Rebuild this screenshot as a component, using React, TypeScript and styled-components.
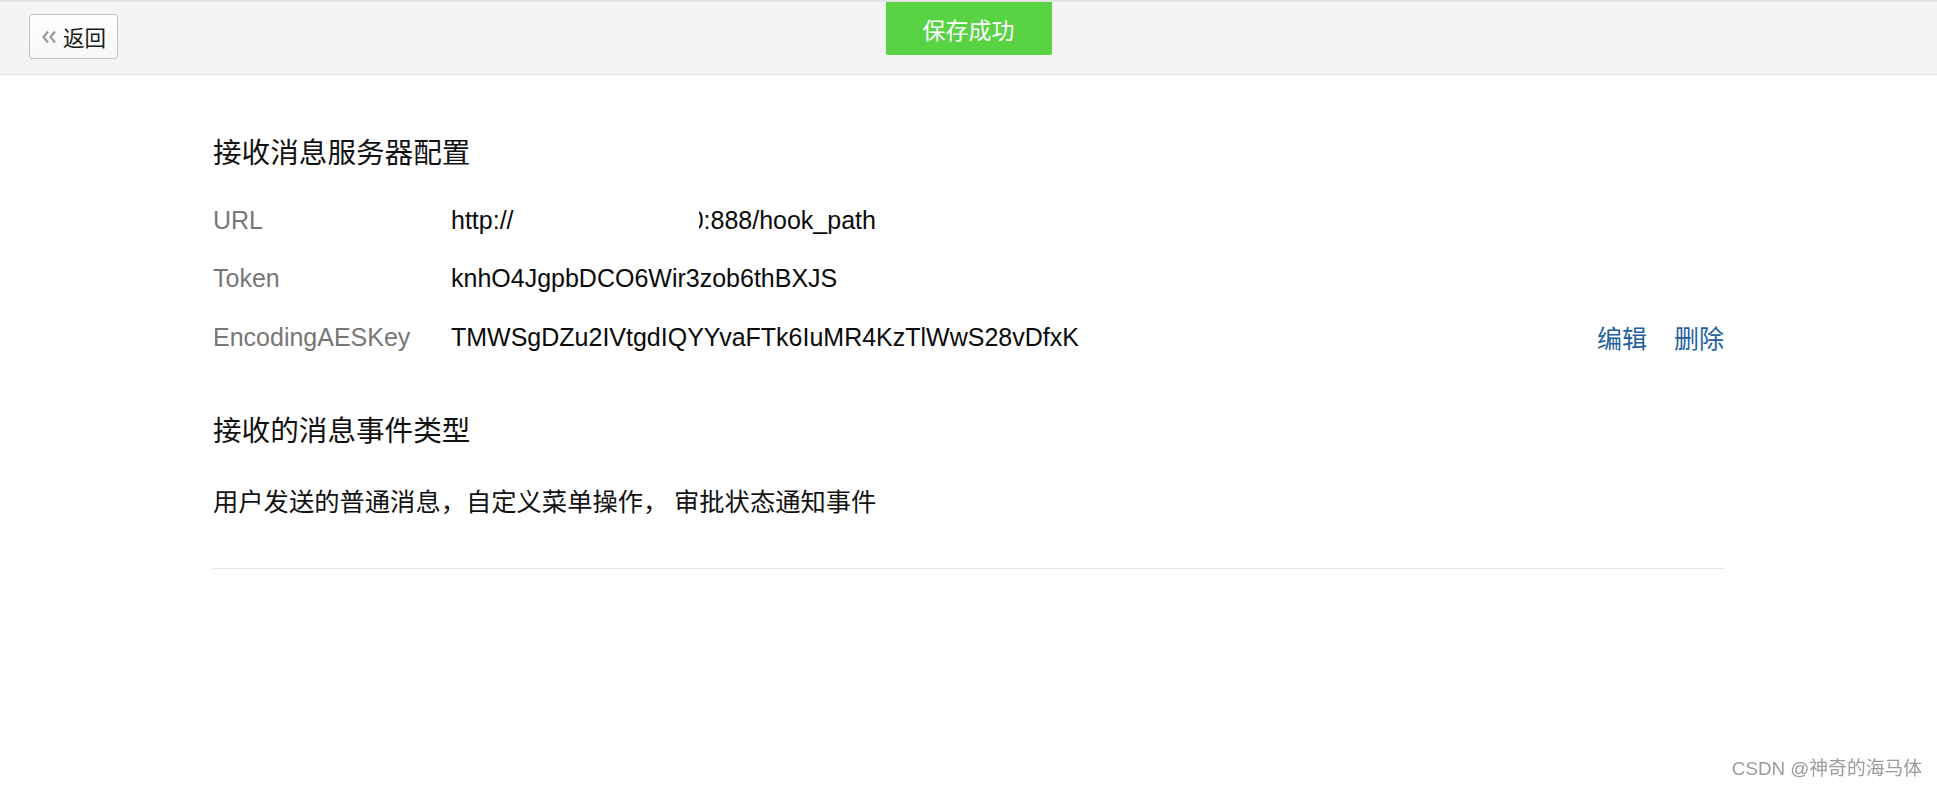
import React from "react";
import styled, { createGlobalStyle } from "styled-components";

const GlobalStyle = createGlobalStyle`
  html, body {
    margin: 0;
    padding: 0;
    background: #ffffff;
  }
  body {
    font-family: "Liberation Sans", Arial, "Noto Sans CJK SC", sans-serif;
    color: #111;
  }
`;

const Page = styled.div`
  position: relative;
  min-height: 787px;
  background: #fff;
`;

const Header = styled.header`
  box-sizing: border-box;
  height: 75px;
  border-top: 2px solid #e4e4e4;
  border-bottom: 1px solid #e2e2e2;
  background: #f4f4f4;
  display: flex;
  align-items: flex-start;
  padding: 12px 0 0 29px;
`;

const BackButton = styled.button`
  box-sizing: border-box;
  height: 45px;
  width: 89px;
  display: flex;
  align-items: center;
  gap: 6px;
  padding: 0 0 0 11px;
  border: 1px solid #c4c4c4;
  border-radius: 3px;
  background: linear-gradient(#ffffff, #f7f7f7);
  color: #1a1a1a;
  font-family: "Noto Sans CJK SC", sans-serif;
  font-size: 21.5px;
  cursor: pointer;
`;

const Toast = styled.div`
  position: absolute;
  top: 2px;
  left: 50%;
  transform: translateX(-50%);
  width: 166px;
  height: 53px;
  background: #58d343;
  border-radius: 0 0 2px 2px;
  color: #fff;
  font-family: "Noto Sans CJK SC", sans-serif;
  font-size: 23px;
  display: flex;
  align-items: center;
  justify-content: center;
`;

const Content = styled.main`
  width: 1511px;
  margin: 0 auto;
  padding-top: 56px;
`;

const SectionTitle = styled.h2<{ $gap: number }>`
  margin: 0 0 ${(p) => p.$gap}px;
  font-family: "Noto Sans CJK SC", sans-serif;
  font-weight: 400;
  font-size: 28.6px;
  line-height: 40px;
  color: #111;
`;

const Row = styled.div`
  display: flex;
  align-items: center;
  height: 58.5px;
  font-size: 25px;
`;

const Label = styled.div`
  width: 238px;
  flex: none;
  color: #777;
`;

const Value = styled.div`
  flex: 1;
  color: #0a0a0a;
  white-space: nowrap;
  display: flex;
  align-items: center;
`;

const Redacted = styled.span`
  display: inline-block;
  width: 185px;
`;

const ClippedDigit = styled.span`
  display: inline-block;
  width: 5px;
  overflow: hidden;
  direction: rtl;
  white-space: nowrap;
`;

const Actions = styled.div`
  display: flex;
  gap: 27px;
  font-family: "Noto Sans CJK SC", sans-serif;
  font-size: 25px;
`;

const ActionLink = styled.a`
  color: #1f5f9f;
  text-decoration: none;
  cursor: pointer;
`;

const Section2 = styled.section`
  margin-top: 42px;
`;

const BodyText = styled.p`
  margin: 33px 0 0;
  font-family: "Noto Sans CJK SC", sans-serif;
  font-size: 25.3px;
  line-height: 36px;
  color: #111;
`;

const Divider = styled.hr`
  margin: 50px 0 0;
  border: none;
  border-top: 1px solid #e6e6e6;
`;

const Watermark = styled.div`
  position: fixed;
  right: 15px;
  bottom: 7px;
  font-family: "Liberation Sans", "Noto Sans CJK SC", sans-serif;
  font-size: 18.8px;
  color: #9c9c9c;
  text-shadow: 0 0 1px #fff;
`;

const DoubleChevron = () => (
  <svg width="16" height="14" viewBox="0 0 16 14" fill="none" stroke="#9a9a9a" strokeWidth="2.2">
    <polyline points="7,1.5 2.5,7 7,12.5" />
    <polyline points="14,1.5 9.5,7 14,12.5" />
  </svg>
);

const rows = [
  { label: "Token", value: "knhO4JgpbDCO6Wir3zob6thBXJS" },
];

export default function App() {
  return (
    <Page>
      <GlobalStyle />
      <Header>
        <BackButton>
          <DoubleChevron />
          返回
        </BackButton>
      </Header>
      <Toast>保存成功</Toast>
      <Content>
        <SectionTitle $gap={20}>接收消息服务器配置</SectionTitle>
        <Row>
          <Label>URL</Label>
          <Value>
            http://
            <Redacted />
            <ClippedDigit>0</ClippedDigit>
            :888/hook_path
          </Value>
        </Row>
        {rows.map((r) => (
          <Row key={r.label}>
            <Label>{r.label}</Label>
            <Value>{r.value}</Value>
          </Row>
        ))}
        <Row>
          <Label>EncodingAESKey</Label>
          <Value>TMWSgDZu2IVtgdIQYYvaFTk6IuMR4KzTlWwS28vDfxK</Value>
          <Actions>
            <ActionLink>编辑</ActionLink>
            <ActionLink>删除</ActionLink>
          </Actions>
        </Row>
        <Section2>
          <SectionTitle $gap={0}>接收的消息事件类型</SectionTitle>
          <BodyText>用户发送的普通消息，自定义菜单操作， 审批状态通知事件</BodyText>
        </Section2>
        <Divider />
      </Content>
      <Watermark>CSDN @神奇的海马体</Watermark>
    </Page>
  );
}
